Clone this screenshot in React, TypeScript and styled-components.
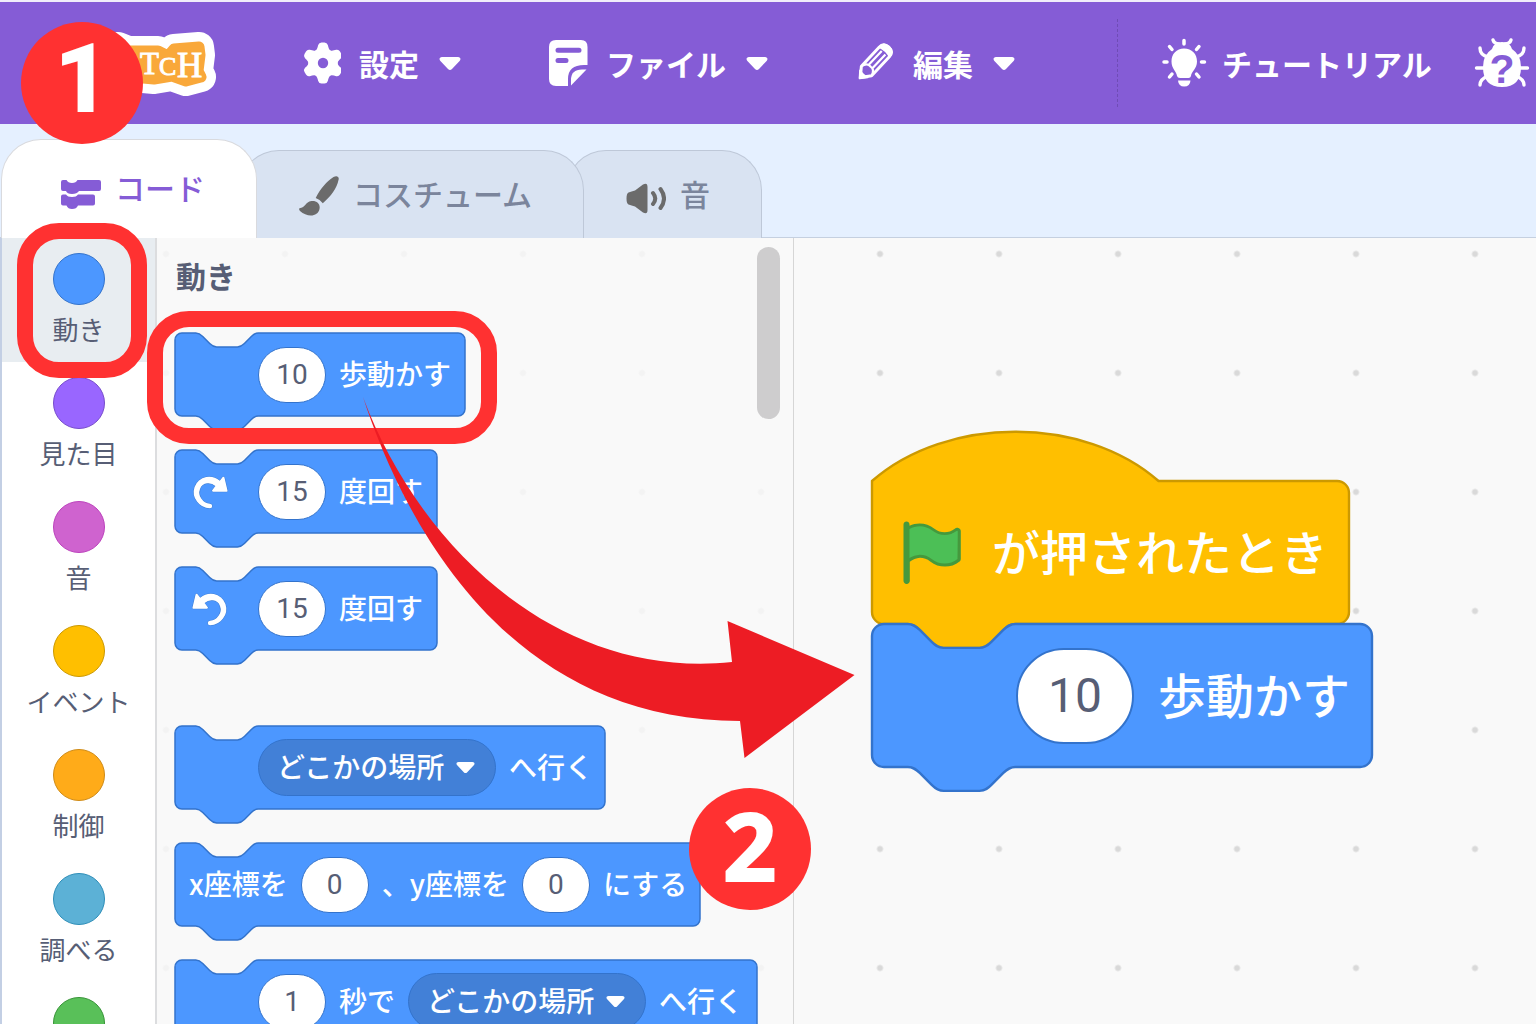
import React from "react";
import styled, { createGlobalStyle } from "styled-components";

const GlobalStyle = createGlobalStyle`
  *, *::before, *::after { box-sizing: border-box; }
  html, body { margin: 0; height: 100%; }
  body {
    overflow: hidden;
    background: #e5f0ff;
    color: #575e75;
    font-family: "Noto Sans CJK JP", "Noto Sans", sans-serif;
  }
  button, input, select { font-family: inherit; margin: 0; }
`;

/* ---------- page frame ---------- */

const Page = styled.div`
  position: relative;
  display: flex;
  flex-direction: column;
  height: 100vh;
  overflow: hidden;
`;

const MenuBar = styled.header`
  display: flex;
  align-items: center;
  flex: none;
  height: 124px;
  padding: 0 0 0 20px;
  border-top: 2px solid #f1edfa;
  background: #855cd6;
  color: #fff;
`;

const Logo = styled.a`
  display: block;
  flex: none;
  width: 200px;
  height: 72px;
  margin-right: 81px;
`;

const MenuNav = styled.nav`
  display: flex;
  flex: none;
  gap: 87px;
`;

const MenuButton = styled.button<{ $gap: number }>`
  display: flex;
  align-items: center;
  flex: none;
  gap: ${(p) => p.$gap}px;
  padding: 0;
  border: 0;
  background: none;
  color: inherit;
  font-size: 30px;
  font-weight: 700;
  line-height: 44px;
  white-space: nowrap;
  cursor: pointer;

  svg { flex: none; }
  span + svg { margin-left: 2px; }
`;

const Divider = styled.div`
  flex: none;
  width: 0;
  height: 88px;
  margin: 0 44px 0 102px;
  border-left: 1px dashed #6f4cb5;
`;

const HelpGroup = styled.div`
  display: flex;
  align-items: center;
  gap: 42px;
`;

const TabStrip = styled.div`
  display: flex;
  align-items: flex-end;
  flex: none;
  height: 114px;
  padding-left: 1px;
  border-bottom: 1px solid #c5d0e0;
`;

const Tab = styled.button<{ $active?: boolean; $layer: number }>`
  position: relative;
  z-index: ${(p) => p.$layer};
  display: flex;
  align-items: center;
  gap: 14px;
  height: ${(p) => (p.$active ? 99 : 88)}px;
  margin: 0 0 -1px;
  padding: 0 51px 0 59px;
  border: 1px solid ${(p) => (p.$active ? "#d9dade" : "#bec8d8")};
  border-bottom: 0;
  border-radius: 40px 40px 0 0;
  background: ${(p) => (p.$active ? "#fff" : "#d9e3f2")};
  color: ${(p) => (p.$active ? "#855cd6" : "#7b859c")};
  font-size: 30px;
  font-weight: 500;
  line-height: 44px;
  white-space: nowrap;
  cursor: pointer;

  span { padding-bottom: 4px; }
  svg { flex: none; }
  & + & { margin-left: -18px; }
`;

const Editor = styled.main`
  display: flex;
  flex: 1;
  min-height: 0;
  border-left: 2px solid #c3cfe4;
  background-color: #f9f9f9;
  background-image: radial-gradient(circle at 60px 60px, #d9d9d9 2px, rgba(217, 217, 217, 0) 4px);
  background-size: 119px 119px;
  background-position: 104px -44px;
`;

/* ---------- category column ---------- */

const Categories = styled.nav`
  flex: none;
  width: 155px;
  overflow: hidden;
  border-right: 2px solid #dcdddf;
  background: #fff;
`;

const CategoryButton = styled.button<{ $active?: boolean }>`
  display: flex;
  flex-direction: column;
  align-items: center;
  gap: 4px;
  width: 100%;
  height: 124px;
  padding: 15px 0 0;
  border: 0;
  background: ${(p) => (p.$active ? "#e8edf1" : "transparent")};
  color: #575e75;
  font-size: 26px;
  font-weight: 400;
  line-height: 40px;
  white-space: nowrap;
  cursor: pointer;
`;

const Bubble = styled.span<{ $fill: string; $edge: string }>`
  flex: none;
  width: 52px;
  height: 52px;
  border: 1px solid ${(p) => p.$edge};
  border-radius: 50%;
  background: ${(p) => p.$fill};
`;

/* ---------- flyout and workspace ---------- */

const Flyout = styled.section`
  position: relative;
  flex: none;
  width: 637px;
  overflow: hidden;
  padding: 15px 0 0 18px;
  border-right: 1px solid #d6d6d6;
  background: rgba(249, 249, 249, 0.8);
`;

const FlyoutTitle = styled.h2`
  margin: 0 0 36px 1px;
  font-size: 30px;
  font-weight: 700;
  line-height: 44px;
`;

const BlockList = styled.div`
  display: flex;
  flex-direction: column;
  gap: 34px;
`;

const BlockGroup = styled(BlockList)`
  & + & { margin-top: 76px; }
`;

const ScrollThumb = styled.div`
  position: absolute;
  top: 9px;
  right: 13px;
  width: 23px;
  height: 172px;
  border-radius: 12px;
  background: #cecdce;
`;

const Workspace = styled.section`
  position: relative;
  flex: 1;
  min-width: 0;
`;

const Script = styled.div`
  position: absolute;
  left: 78px;
  top: 243px;
  display: flex;
  flex-direction: column;
`;

/* ---------- blocks ---------- */

type Size = "small" | "large";

const metrics = {
  small: { unit: 1.735, height: 83, pad: 14, gap: 13, slot: 56, font: 28, fieldW: 68, fieldH: 56, edge: 1, lift: 4 },
  large: { unit: 2.985, height: 143, pad: 24, gap: 24, slot: 96, font: 48, fieldW: 118, fieldH: 96, edge: 2, lift: 6 },
};

const BlockBody = styled.div<{ $size: Size; $width: number }>`
  position: relative;
  display: flex;
  align-items: center;
  flex: none;
  gap: ${(p) => metrics[p.$size].gap}px;
  width: ${(p) => p.$width}px;
  height: ${(p) => metrics[p.$size].height}px;
  padding-left: ${(p) => metrics[p.$size].pad}px;
  color: #fff;
  font-size: ${(p) => metrics[p.$size].font}px;
  font-weight: 500;
  line-height: 1;
  white-space: nowrap;
`;

const BlockShape = styled.svg`
  position: absolute;
  inset: 0;
  width: 100%;
  height: 100%;
  overflow: visible;
`;

const BlockLabel = styled.span<{ $size?: Size }>`
  position: relative;
  flex: none;
  padding-bottom: ${(p) => metrics[p.$size ?? "small"].lift}px;
`;

const IconSlot = styled.span<{ $size: Size }>`
  position: relative;
  display: flex;
  flex: none;
  width: ${(p) => metrics[p.$size].slot}px;
`;

const FlagSlot = styled.span`
  position: relative;
  display: flex;
  flex: none;
`;

const NumberField = styled.input<{ $size: Size }>`
  position: relative;
  flex: none;
  width: ${(p) => metrics[p.$size].fieldW}px;
  height: ${(p) => metrics[p.$size].fieldH}px;
  padding: 0;
  border: ${(p) => metrics[p.$size].edge}px solid #3373cc;
  border-radius: ${(p) => metrics[p.$size].fieldH / 2}px;
  background: #fff;
  color: #575e75;
  font-family: Roboto, "Liberation Sans", sans-serif;
  font-size: ${(p) => metrics[p.$size].font}px;
  text-align: center;
`;

const SelectWrap = styled.span`
  position: relative;
  display: flex;
  align-items: center;
  flex: none;

  svg {
    position: absolute;
    right: 21px;
    pointer-events: none;
  }
`;

const Select = styled.select`
  width: 238px;
  height: 57px;
  padding: 0 0 3px 18px;
  border: 1px solid #3373cc;
  border-radius: 29px;
  appearance: none;
  background: #4280d7;
  color: #fff;
  font-size: 28px;
  font-weight: 500;
`;

function stackPath(u: number, w: number, h: number, hat = false) {
  const n = (...v: number[]) => v.map((x) => (x * u).toFixed(2)).join(" ");
  const r = 4 * u;
  const top = hat
    ? `M0 0 c${n(25, -22, 71, -22, 96, 0)}`
    : `M0 ${r} A${r} ${r} 0 0 1 ${r} 0 H${12 * u} c${n(2, 0, 3, 1, 4, 2)} l${n(4, 4)} c${n(1, 1, 2, 2, 4, 2)} h${12 * u} c${n(2, 0, 3, -1, 4, -2)} l${n(4, -4)} c${n(1, -1, 2, -2, 4, -2)}`;
  return `${top} H${w - r} a${r} ${r} 0 0 1 ${r} ${r} V${h - r} a${r} ${r} 0 0 1 ${-r} ${r} H${48 * u} c${n(-2, 0, -3, 1, -4, 2)} l${n(-4, 4)} c${n(-1, 1, -2, 2, -4, 2)} h${-12 * u} c${n(-2, 0, -3, -1, -4, -2)} l${n(-4, -4)} c${n(-1, -1, -2, -2, -4, -2)} H${r} a${r} ${r} 0 0 1 ${-r} ${-r} z`;
}

interface BlockProps {
  size?: Size;
  width: number;
  hat?: boolean;
  children: React.ReactNode;
}

function Block({ size = "small", width, hat, children }: BlockProps) {
  const m = metrics[size];
  return (
    <BlockBody $size={size} $width={width}>
      <BlockShape aria-hidden="true">
        <path
          d={stackPath(m.unit, width, m.height, hat)}
          fill={hat ? "#ffbf00" : "#4c97ff"}
          stroke={hat ? "#cc9900" : "#3373cc"}
          strokeWidth={size === "large" ? 2.4 : 1.5}
        />
      </BlockShape>
      {children}
    </BlockBody>
  );
}

function Num({ value, label, size = "small" }: { value: string; label: string; size?: Size }) {
  return <NumberField $size={size} type="text" defaultValue={value} aria-label={label} />;
}

function PlaceSelect({ label }: { label: string }) {
  return (
    <SelectWrap>
      <Select aria-label={label}>
        <option>どこかの場所</option>
      </Select>
      <Caret width={19} height={13} />
    </SelectWrap>
  );
}

/* ---------- icons ---------- */

function Caret({ width = 22, height = 15 }: { width?: number; height?: number }) {
  return (
    <svg width={width} height={height} viewBox="0 0 22 15" aria-hidden="true">
      <path d="M3 1 H19 C21.500 1 22.200 3.400 20.600 5 L13 13 Q11 15 9 13 L1.400 5 C-.2 3.400 .5 1 3 1Z" fill="#fff" />
    </svg>
  );
}

function GearIcon() {
  const teeth = [0, 60, 120, 180, 240, 300];
  return (
    <svg width="40" height="48" viewBox="0 0 40 48" aria-hidden="true">
      <g fill="#fff" transform="translate(22 24)">
        {teeth.map((a) => (
          <path key={a} d="M-9 -11 C-6 -13 -5.500 -15 -4.800 -18 Q-4 -20.500 -1.500 -20.500 H1.500 Q4 -20.500 4.800 -18 C5.500 -15 6 -13 9 -11Z" transform={`rotate(${a})`} />
        ))}
        <circle r="14.500" />
        <circle r="5.200" fill="#855cd6" />
      </g>
    </svg>
  );
}

function FileIcon() {
  return (
    <svg width="40" height="48" viewBox="0 0 40 48" aria-hidden="true">
      <path d="M8 1 H33 Q39.500 1 39.500 8 V26 H36 Q20 26 20 40 V47 H8 Q1 47 1 40 V8 Q1 1 8 1Z" fill="#fff" />
      <path d="M38.500 30.500 L23 46.500 V41 Q23 30.500 34 30.500Z" fill="#fff" />
      <path d="M10 11.200 H31 M10 21.500 H18" stroke="#855cd6" strokeWidth="5" strokeLinecap="round" />
    </svg>
  );
}

function PencilIcon() {
  return (
    <svg width="40" height="48" viewBox="0 0 40 48" aria-hidden="true">
      <g transform="translate(4 40) rotate(-47)">
        <path d="M2 0 L11 -7 H37 Q43.500 -7 43.500 0 Q43.500 7 37 7 H11 Z" fill="none" stroke="#fff" strokeWidth="3" strokeLinejoin="round" />
        <path d="M36 -8 H37 Q45 -8 45 0 Q45 8 37 8 H36 Q39 0 36 -8Z" fill="#fff" />
        <path d="M1 0 L7 -5 Q5 0 7 5Z" fill="#fff" stroke="#fff" strokeWidth="2" strokeLinejoin="round" />
        <path d="M11 -7 Q18 -5 17 0 Q18 5 11 7 M17 -2.500 H36 M17 2.500 H36" fill="none" stroke="#fff" strokeWidth="2.200" />
      </g>
    </svg>
  );
}

function BulbIcon() {
  return (
    <svg width="46" height="50" viewBox="0 0 46 50" aria-hidden="true">
      <path d="M22 10.500 C30 10.500 35 16 35 23.500 C35 31 29.500 33 29 38 Q28.500 40 26.500 40 H18 Q15.500 40 15 38 C14.500 33 9.500 31 9.500 23.500 C9.500 16 14.500 10.500 22 10.500Z" fill="#fff" />
      <path d="M16 42.500 H28.500 Q28 48.500 22.200 48.500 Q16.500 48.500 16 42.500Z" fill="#fff" />
      <path d="M22 2.500 V6 M2 24 H5 M39.500 24 H42.500 M7.500 8.500 L10 11.500 M37 8.500 L34.500 11.500 M7.500 39 L10 36 M37 39 L34.500 36" stroke="#fff" strokeWidth="3.500" strokeLinecap="round" />
    </svg>
  );
}

function BugIcon() {
  return (
    <svg width="56" height="52" viewBox="0 0 56 52" aria-hidden="true">
      <g fill="none" stroke="#fff" strokeWidth="3.400" strokeLinecap="round" strokeLinejoin="round">
        <path d="M19 3 Q20 6.500 25 7 M37 3 Q36 6.500 31 7" />
        <path d="M6 11 Q6 18 14 20 M50 11 Q50 18 42 20" />
        <path d="M2.500 31 H12 M53.500 31 H44" />
        <path d="M6 48 Q6 42 14 39 M50 48 Q50 42 42 39" />
      </g>
      <path d="M18 12 Q20 5 28 5 Q36 5 38 12 Q47 18 47 30 Q47 50 28 50 Q9 50 9 30 Q9 18 18 12Z" fill="#fff" />
      <text x="28" y="46" textAnchor="middle" fontFamily="Liberation Sans, sans-serif" fontWeight="700" fontSize="41" fill="#855cd6">?</text>
    </svg>
  );
}

function CodeIcon() {
  return (
    <svg width="40" height="40" viewBox="0 0 40 40" aria-hidden="true">
      <g fill="#855cd6" transform="translate(0 3)">
        <path d="M2 8 H5.500 Q7 11 11 11 Q15 11 16.500 8 H38 Q40 8 40 10 V17 Q40 19 38 19 H18 Q16 22 11 22 Q6 22 5 19 H2 Q0 19 0 17 V10 Q0 8 2 8Z" />
        <path d="M2 22.500 H5 Q6.500 25 11 25 Q15.500 25 17 22.500 H32 Q34 22.500 34 24.500 V31.500 Q34 33.500 32 33.500 H17 Q15.500 37 11 37 Q7 37 5.500 33.500 H2 Q0 33.500 0 31.500 V24.500 Q0 22.500 2 22.500Z" />
      </g>
    </svg>
  );
}

function BrushIcon() {
  return (
    <svg width="40" height="42" viewBox="0 -2 40 42" aria-hidden="true">
      <g fill="#6b6b6b">
        <path d="M37.500 .2 Q40.500 .5 39.500 4 C38 12 32 20.500 23.800 27.200 Q21 23.500 16.700 22 C21 13 28 5 34.500 1 Q36.500 0 37.500 .2Z" />
        <path d="M12.500 25 C18 24.500 21.500 28 20.500 33 C19 41 8 41.500 1 35 Q-1 32 1.500 32 C6.500 31.500 6 26 12.500 25Z" />
      </g>
    </svg>
  );
}

function SoundIcon() {
  return (
    <svg width="40" height="40" viewBox="0 -3 40 40" aria-hidden="true">
      <path d="M2.500 14.500 Q5.500 13.500 9 12.500 L17 6.500 Q21.500 4 21.500 9 V32 Q21.500 37 17 34.500 L9 28.500 Q5.500 27.500 2.500 26.500 Q0.500 25.500 .5 20.500 Q.5 15.500 2.500 14.500Z" fill="#6b6b6b" />
      <path d="M27 15 Q31.500 20.500 27 26 M34.500 11 Q41.500 20.500 34.500 30" fill="none" stroke="#6b6b6b" strokeWidth="4" strokeLinecap="round" />
    </svg>
  );
}

function TurnIcon({ mirrored }: { mirrored?: boolean }) {
  return (
    <svg width="42" height="42" viewBox="0 0 24 24" aria-hidden="true">
      <g transform={mirrored ? "translate(24 0) scale(-1 1)" : undefined}>
        <path
          d="M21.380 11.830H13.770a.59.59 0 0 1-.43-1l1.750-2.190a5.900 5.900 0 0 0-4.700-1.580 5.070 5.070 0 0 0-4.110 3.170A6 6 0 0 0 7 15.770a6.510 6.510 0 0 0 5 2.920 1.310 1.310 0 0 1-.08 2.620 9.300 9.300 0 0 1-7.350-3.820A9.160 9.160 0 0 1 3.170 9.120 8.510 8.510 0 0 1 5.710 5.400 8.760 8.760 0 0 1 9.820 3.480a9.710 9.710 0 0 1 7.750 2.070l1.670-2.100a.59.59 0 0 1 1 .21L22 11.080A.59.59 0 0 1 21.380 11.830Z"
          fill="#fff"
          stroke="#3d79cc"
          strokeWidth="0.500"
          paintOrder="stroke"
        />
      </g>
    </svg>
  );
}

function FlagIcon() {
  return (
    <svg width="72" height="72" viewBox="0 0 24 24" aria-hidden="true">
      <path
        d="M20.800 3.700c-.4-.2-.9-.1-1.200.2-2 1.600-4.800 1.600-6.800 0-2.300-1.900-5.600-2.300-8.300-1v-.4c0-.6-.5-1-1-1s-1 .4-1 1v18.800c0 .5.5 1 1 1h.1c.5 0 1-.5 1-1v-6.400c1-.7 2.100-1.200 3.400-1.300 1.200 0 2.400.4 3.400 1.200 2.900 2.300 7 2.300 9.800 0 .3-.2.400-.5.400-.9V4.700c0-.4-.3-.8-.8-1z"
        fill="#45993d"
      />
      <path
        d="M20.600 4.800l-.1 9.100v.1c-2.500 2-6.100 2-8.600 0-1.100-.9-2.500-1.400-4-1.400-1.200.1-2.300.5-3.400 1.100V4c2.500-1.400 5.500-1.100 7.700.6 2.400 1.900 5.700 1.900 8.100 0h.2c0 .1.1.1.1.2z"
        fill="#4cbf56"
      />
    </svg>
  );
}

function ScratchLogo() {
  const outline =
    "M60 22 L98 20 L108 24 L138 24 L148 29 L154 22 L179 20 L180 28 L178 44 L181 50 L166 54 L152 49 L134 52 L112 50 H60Z";
  return (
    <svg width="200" height="72" viewBox="0 0 200 72" aria-hidden="true">
      <g strokeLinejoin="round">
        <path d={outline} fill="#fff" stroke="#fff" strokeWidth="30" />
        <path d={outline} fill="#f9a83a" stroke="#f9a83a" strokeWidth="11" />
      </g>
      <g fontFamily="Liberation Serif, serif" fill="#fff" stroke="#fff" strokeWidth="0.900">
        <text x="120" y="47" fontSize="31">T</text>
        <text x="139" y="48" fontSize="26">C</text>
        <text x="157" y="50" fontSize="35">H</text>
      </g>
    </svg>
  );
}

/* ---------- tutorial marks laid over the editor ---------- */

const StepBadge = styled.span<{ $x: number; $y: number; $family: string; $weight: number }>`
  position: absolute;
  z-index: 20;
  left: ${(p) => p.$x}px;
  top: ${(p) => p.$y}px;
  display: flex;
  align-items: center;
  justify-content: center;
  width: 122px;
  height: 122px;
  padding-bottom: 8px;
  border-radius: 50%;
  background: #ff3131;
  color: #fff;
  font-family: ${(p) => p.$family}, sans-serif;
  font-size: 96px;
  font-weight: ${(p) => p.$weight};
  line-height: 1;
`;

const Ring = styled.div<{ $x: number; $y: number; $w: number; $h: number }>`
  position: absolute;
  z-index: 10;
  left: ${(p) => p.$x}px;
  top: ${(p) => p.$y}px;
  width: ${(p) => p.$w}px;
  height: ${(p) => p.$h}px;
  border: 16px solid #ff3131;
  border-radius: 42px;
  pointer-events: none;
`;

const ArrowLayer = styled.svg`
  position: absolute;
  z-index: 15;
  left: 363px;
  top: 397px;
  width: 492px;
  height: 361px;
  pointer-events: none;
`;

/* ---------- app ---------- */

const categories = [
  { name: "動き", fill: "#4c97ff", edge: "#3373cc" },
  { name: "見た目", fill: "#9966ff", edge: "#774dcb" },
  { name: "音", fill: "#cf63cf", edge: "#bd42bd" },
  { name: "イベント", fill: "#ffbf00", edge: "#cc9900" },
  { name: "制御", fill: "#ffab19", edge: "#cf8b17" },
  { name: "調べる", fill: "#5cb1d6", edge: "#2e8eb8" },
  { name: "演算", fill: "#59c059", edge: "#389438" },
];

const menus = [
  { name: "設定", icon: <GearIcon /> },
  { name: "ファイル", icon: <FileIcon /> },
  { name: "編集", icon: <PencilIcon /> },
];

export default function App() {
  return (
    <Page>
      <GlobalStyle />
      <MenuBar>
        <Logo href="#" aria-label="Scratch">
          <ScratchLogo />
        </Logo>
        <MenuNav>
          {menus.map((m) => (
            <MenuButton key={m.name} $gap={18}>
              {m.icon}
              <span>{m.name}</span>
              <Caret />
            </MenuButton>
          ))}
        </MenuNav>
        <Divider />
        <HelpGroup>
          <MenuButton $gap={14}>
            <BulbIcon />
            <span>チュートリアル</span>
          </MenuButton>
          <MenuButton $gap={14} aria-label="デバッグ">
            <BugIcon />
          </MenuButton>
        </HelpGroup>
      </MenuBar>

      <TabStrip>
        <Tab $active $layer={3}>
          <CodeIcon />
          <span>コード</span>
        </Tab>
        <Tab $layer={2}>
          <BrushIcon />
          <span>コスチューム</span>
        </Tab>
        <Tab $layer={1}>
          <SoundIcon />
          <span>音</span>
        </Tab>
      </TabStrip>

      <Editor>
        <Categories>
          {categories.map((c, i) => (
            <CategoryButton key={c.name} $active={i === 0}>
              <Bubble $fill={c.fill} $edge={c.edge} />
              <span>{c.name}</span>
            </CategoryButton>
          ))}
        </Categories>

        <Flyout>
          <FlyoutTitle>動き</FlyoutTitle>
          <BlockGroup>
            <Block width={290}>
              <IconSlot $size="small" />
              <Num value="10" label="歩数" />
              <BlockLabel>歩動かす</BlockLabel>
            </Block>
            <Block width={262}>
              <IconSlot $size="small">
                <TurnIcon />
              </IconSlot>
              <Num value="15" label="右に回す角度" />
              <BlockLabel>度回す</BlockLabel>
            </Block>
            <Block width={262}>
              <IconSlot $size="small">
                <TurnIcon mirrored />
              </IconSlot>
              <Num value="15" label="左に回す角度" />
              <BlockLabel>度回す</BlockLabel>
            </Block>
          </BlockGroup>
          <BlockGroup>
            <Block width={430}>
              <IconSlot $size="small" />
              <PlaceSelect label="行き先" />
              <BlockLabel>へ行く</BlockLabel>
            </Block>
            <Block width={525}>
              <BlockLabel>x座標を</BlockLabel>
              <Num value="0" label="x座標" />
              <BlockLabel>、y座標を</BlockLabel>
              <Num value="0" label="y座標" />
              <BlockLabel>にする</BlockLabel>
            </Block>
            <Block width={582}>
              <IconSlot $size="small" />
              <Num value="1" label="秒数" />
              <BlockLabel>秒で</BlockLabel>
              <PlaceSelect label="移動先" />
              <BlockLabel>へ行く</BlockLabel>
            </Block>
          </BlockGroup>
          <ScrollThumb />
        </Flyout>

        <Workspace>
          <Script>
            <Block size="large" width={477} hat>
              <FlagSlot>
                <FlagIcon />
              </FlagSlot>
              <BlockLabel $size="large">が押されたとき</BlockLabel>
            </Block>
            <Block size="large" width={500}>
              <IconSlot $size="large" />
              <Num size="large" value="10" label="歩数" />
              <BlockLabel $size="large">歩動かす</BlockLabel>
            </Block>
          </Script>
        </Workspace>
      </Editor>

      <Ring $x={17} $y={223} $w={130} $h={155} />
      <Ring $x={147} $y={311} $w={350} $h={133} />
      <ArrowLayer viewBox="363 397 492 361" aria-hidden="true">
        <path
          d="M363 397 C400 510 500 721 740 721 L744.500 758 L854.500 675 L727.500 621 L732 662 C560 680 420 550 363 397Z"
          fill="#ed1c24"
        />
      </ArrowLayer>
      <StepBadge $x={21} $y={22} $family="Roboto" $weight={900}>1</StepBadge>
      <StepBadge $x={689} $y={788} $family='"Noto Sans"' $weight={800}>2</StepBadge>
    </Page>
  );
}
